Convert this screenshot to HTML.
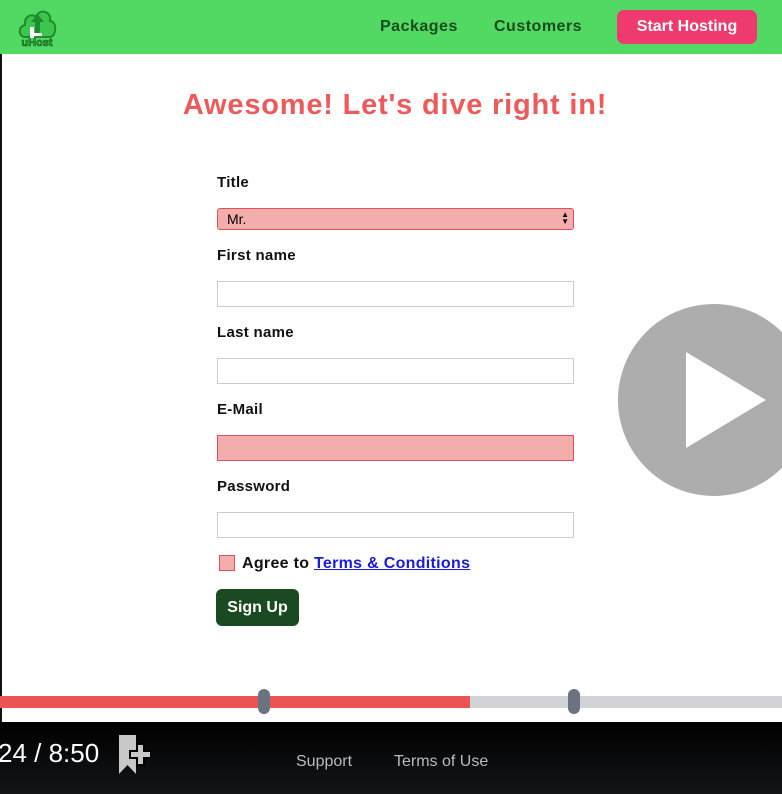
<!DOCTYPE html>
<html><head><style>
*{box-sizing:border-box;margin:0;padding:0}
body{width:782px;height:794px;overflow:hidden;background:#fff;font-family:"Liberation Sans",sans-serif;position:relative}
.nav{position:absolute;left:0;top:0;width:782px;height:54px;background:#52d963}
.nav a{position:absolute;top:18px;font-weight:bold;font-size:16px;letter-spacing:.5px;color:#1a4a1f;text-decoration:none}
.btn{position:absolute;left:617px;top:10px;width:140px;height:34px;background:#ef3a6f;border-radius:7px;color:#fff;font-weight:bold;font-size:16px;text-align:center;line-height:34px}
.lb{position:absolute;left:0;top:54px;width:2px;height:668px;background:#111}
h1{position:absolute;left:0;width:790px;top:89px;text-align:center;color:#ec5a5a;font-size:29px;letter-spacing:.8px;font-weight:bold}
.l{position:absolute;left:217px;font-weight:bold;font-size:15px;letter-spacing:.3px;color:#111}
.i{position:absolute;left:217px;width:357px;height:26px;border:1px solid #ccc;background:#fff}
.e{background:#f4adad;border-color:#e0505a}
.video{position:absolute;left:618px;top:304px;width:192px;height:192px;border-radius:50%;background:#adadad}
.bar{position:absolute;top:696px;height:12px}
.knob{position:absolute;top:689px;width:12px;height:25px;border-radius:6px;background:#6b7280}
.foot{position:absolute;left:0;top:722px;width:782px;height:72px;background:linear-gradient(#000,#141518)}
</style></head><body>
<div class="nav">
<svg style="position:absolute;left:16px;top:7px" width="42" height="42" viewBox="0 0 42 42"><path d="M9 30 C2 30 2 19 9 18 C8 9 16 6 20 10 C23 1 36 4 34 14 C41 14 41 29 34 30 Z" fill="#3cc64e" stroke="#1f8a2e" stroke-width="2"/><rect x="19" y="13" width="5" height="15" fill="#1f8a2e"/><path d="M15 15 L21.5 7 L28 15Z" fill="#1f8a2e"/><rect x="14" y="20" width="4" height="11" fill="#fff"/><rect x="18" y="26" width="8" height="3" fill="#fff"/><text x="21" y="39" text-anchor="middle" font-size="11" font-weight="bold" fill="#2aa03a" stroke="#145a20" stroke-width=".6" font-family="Liberation Sans">uHost</text></svg>
<a style="left:380px">Packages</a><a style="left:494px">Customers</a>
<div class="btn">Start Hosting</div>
</div>
<div class="lb"></div>
<h1>Awesome! Let's dive right in!</h1>
<div class="l" style="top:174px">Title</div>
<div class="i e" style="top:208px;height:22px;border-radius:3px;font-size:14px;padding-left:9px;line-height:20px">Mr.<span style="position:absolute;right:4px;top:2px;font-size:8px;line-height:7px">▲<br>▼</span></div>
<div class="l" style="top:247px">First name</div>
<div class="i" style="top:281px"></div>
<div class="l" style="top:324px">Last name</div>
<div class="i" style="top:358px"></div>
<div class="l" style="top:401px">E-Mail</div>
<div class="i e" style="top:435px"></div>
<div class="l" style="top:478px">Password</div>
<div class="i" style="top:512px"></div>
<div style="position:absolute;left:219px;top:555px;width:16px;height:16px;background:#f4adad;border:1px solid #e0505a"></div>
<div class="l" style="left:242px;top:555px;font-size:16px">Agree to <span style="color:#1a1adc;text-decoration:underline">Terms &amp; Conditions</span></div>
<div style="position:absolute;left:216px;top:589px;width:83px;height:37px;background:#1b4a22;border-radius:6px;color:#fff;font-weight:bold;font-size:16px;text-align:center;line-height:37px">Sign Up</div>
<div class="video"><svg style="position:absolute;left:68px;top:48px" width="80" height="96"><path d="M0 0 L80 48 L0 96Z" fill="#fff"/></svg></div>
<div class="bar" style="left:0;width:470px;background:#ea5455"></div>
<div class="bar" style="left:470px;width:312px;background:#d1d2d6"></div>
<div class="knob" style="left:258px"></div><div class="knob" style="left:568px"></div>
<div class="foot">
<div style="position:absolute;left:-2px;top:16px;color:#fff;font-size:26px">24 / 8:50</div>
<svg style="position:absolute;left:116px;top:10px" width="44" height="44"><path d="M3 3 H20 V42 L11.5 33 L3 42Z" fill="#c8c8c8"/><path d="M21 12 h7 v7 h7 v7 h-7 v7 h-7 v-7 h-7 v-7 h7z" fill="#c8c8c8" stroke="#000" stroke-width="2"/></svg>
<div style="position:absolute;left:296px;top:31px;color:#bbb;font-size:16px">Support</div>
<div style="position:absolute;left:394px;top:31px;color:#bbb;font-size:16px">Terms of Use</div>
</div>
</body></html>
